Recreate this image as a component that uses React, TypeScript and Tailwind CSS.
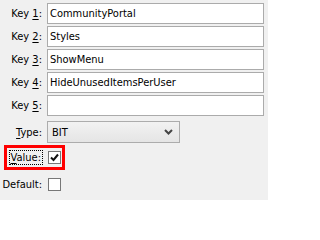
import React from 'react';

const font = { fontFamily: '"DejaVu Sans Condensed", "DejaVu Sans", Tahoma, sans-serif' };

function KeyRow({ n, value }: { n: number; value: string }) {
    return (
        <div className="flex items-center h-[21px]">
            <div className="w-[43px] text-right pr-[1px]">
                Key <span className="underline underline-offset-2">{n}</span>:
            </div>
            <div className="ml-[4px] w-[217px] h-[21px] bg-white border border-[#ababab] px-[2px] flex items-center">
                {value}
            </div>
        </div>
    );
}

function Check({ checked }: { checked?: boolean }) {
    return (
        <div className="w-[13px] h-[13px] bg-white border border-[#777] flex items-center justify-center">
            {checked && (
                <svg width="9" height="9" viewBox="0 0 9 9">
                    <path d="M1 4.5 L3.5 7 L8 1.5" stroke="#111" strokeWidth="2" fill="none" />
                </svg>
            )}
        </div>
    );
}

export default function App() {
    return (
        <div className="w-[268px] h-[200px] bg-[#f0f0f0] text-[11px] text-black leading-none pt-[3px] overflow-hidden" style={font}>
            <div className="flex flex-col gap-[2px]">
                <KeyRow n={1} value="CommunityPortal" />
                <KeyRow n={2} value="Styles" />
                <KeyRow n={3} value="ShowMenu" />
                <KeyRow n={4} value="HideUnusedItemsPerUser" />
                <KeyRow n={5} value="" />
            </div>

            {/* Type */}
            <div className="flex items-center h-[22px] mt-[5px]">
                <div className="w-[43px] text-right pr-[1px]">
                    <span className="underline underline-offset-2">T</span>ype:
                </div>
                <div className="ml-[4px] w-[133px] h-[22px] border border-[#acacac] bg-gradient-to-b from-[#f2f2f2] to-[#e5e5e5] flex items-center justify-between pl-[4px] pr-[6px]">
                    <span>BIT</span>
                    <svg width="9" height="6" viewBox="0 0 9 6">
                        <path d="M1 1 L4.5 4.5 L8 1" stroke="#444" strokeWidth="2" fill="none" />
                    </svg>
                </div>
            </div>

            {/* Value */}
            <div className="relative flex items-center h-[23px] mt-[3px]">
                <div className="absolute left-[4px] -top-[1px] w-[61px] h-[25px] border-[3px] border-[#ff0000]" />
                <div className="w-[43px] flex justify-end">
                    <span className="border border-dotted border-black px-[1px] py-[1px]">
                        <span className="underline underline-offset-2">V</span>alue:
                    </span>
                </div>
                <div className="ml-[5px]">
                    <Check checked />
                </div>
            </div>

            {/* Default */}
            <div className="flex items-center h-[13px] mt-[9px]">
                <div className="w-[43px] text-right pr-[1px]">Default:</div>
                <div className="ml-[5px]">
                    <Check />
                </div>
            </div>
        </div>
    );
}
